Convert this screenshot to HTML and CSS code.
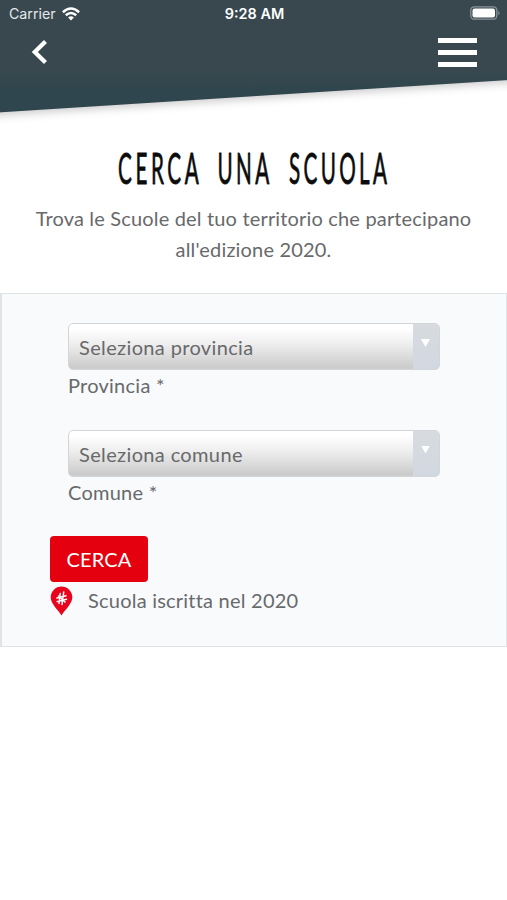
FILE: index.html
```html
<!DOCTYPE html>
<html lang="it">
<head>
<meta charset="utf-8">
<title>Cerca una scuola</title>
<link rel="stylesheet" href="styles.css">
</head>
<body>
<header class="header">
  <svg class="header-shape" width="507" height="125" viewBox="0 0 507 125" aria-hidden="true">
    <defs><linearGradient id="bar" x1="0" y1="0" x2="0" y2="1"><stop offset="0" stop-color="#39474f"/><stop offset=".65" stop-color="#39484f"/><stop offset=".8" stop-color="#30464e"/><stop offset="1" stop-color="#30464e"/></linearGradient></defs>
    <path class="slope" d="M-10-10H517V79.4L-10 112.9Z" fill="url(#bar)"/>
  </svg>
  <div class="status">
    <div class="carrier"><span>Carrier</span>
      <svg width="18" height="14" viewBox="0 0 18 14" fill="none" stroke="#fff" stroke-width="2.5"><path d="M.9 5.2Q9-2.1 17.1 5.2M3.8 8.3Q9 3.6 14.2 8.3"/><path d="M6.1 10.5Q9 8.2 11.9 10.5L9 13.5Z" fill="#fff" stroke="none"/></svg>
    </div>
    <time>9:28 AM</time>
    <svg class="battery" width="30" height="14" viewBox="0 0 30 14"><rect x=".8" y=".8" width="26" height="12.4" rx="3.5" fill="none" stroke="#89949a" stroke-width="1.3"/><rect x="2.5" y="2.4" width="22.5" height="9.2" rx="2" fill="#fff"/><path d="M28.3 4.7Q30.8 7 28.3 9.3Z" fill="#89949a"/></svg>
  </div>
  <nav class="nav">
    <svg width="20" height="26" viewBox="0 0 20 26"><path d="M15.5 2.5L4.8 13L15.5 23.5" fill="none" stroke="#fff" stroke-width="4.3"/></svg>
    <div class="menu"><i></i><i></i><i></i></div>
  </nav>
</header>
<main>
  <h1>
    <svg width="300" height="64" viewBox="-10 -10 300 64">
      <g class="title">
        <text transform="translate(4 37) scale(.48 1)" letter-spacing="7.5">CERCA</text>
        <text transform="translate(103.500 37) scale(.48 1)" letter-spacing="7">UNA</text>
        <text transform="translate(175 37) scale(.48 1)" letter-spacing="7">SCUOLA</text>
      </g>
    </svg>
  </h1>
  <p class="intro">Trova le Scuole del tuo territorio che partecipano<br>all'edizione 2020.</p>
  <form class="panel">
    <div class="field">
      <div class="select"><span>Seleziona provincia</span><b><i></i></b></div>
      <label>Provincia *</label>
    </div>
    <div class="field">
      <div class="select"><span>Seleziona comune</span><b><i></i></b></div>
      <label>Comune *</label>
    </div>
    <button class="submit" type="button">CERCA</button>
    <div class="legend">
      <svg width="24" height="30" viewBox="0 0 24 30"><path d="M11.500 29.500C8.500 24 .7 18 .7 11.200A10.8 10.6 0 0 1 22.3 11.200C22.3 18 14.500 24 11.500 29.500Z" fill="#e9041e"/><path d="M10.2 7.5L9 17.5M13.7 6L12 18.5M7 12L16 9.8M7.2 15.5L16.5 13.3M8.500 10L15 16" fill="none" stroke="#fff" stroke-width="1.5" stroke-linecap="round"/></svg>
      <span>Scuola iscritta nel 2020</span>
    </div>
  </form>
</main>
</body>
</html>
```

FILE: styles.css
```css
* { box-sizing: border-box; }
body { margin: 0; width: 507px; height: 900px; overflow: hidden; background: #fff; color: #68696b; font: 20px/30px Lato, sans-serif; letter-spacing: .17px; font-variant-ligatures: none; }
svg { display: block; }
.header { position: relative; height: 125px; color: #fff; }
.header-shape { position: absolute; left: 0; top: 0; }
.slope { filter: drop-shadow(0 3px 4px rgba(0, 0, 0, .2)); }
.status { position: relative; display: grid; grid-template-columns: 1fr auto 1fr; align-items: center; height: 27px; padding: 0 7px 0 9px; font: 15px/27px Inter, sans-serif; letter-spacing: 0; }
.carrier { display: flex; align-items: center; gap: 6px; color: #e4e9eb; font-size: 14.2px; }
.status time { font-weight: 600; font-size: 14.4px; }
.battery { justify-self: end; margin-top: -1px; }
.nav { position: relative; display: flex; justify-content: space-between; align-items: center; height: 50px; padding: 0 30px 0 30px; }
.menu { display: flex; flex-direction: column; gap: 7px; width: 39px; }
.menu i { height: 5px; background: #fff; }
h1 { display: flex; justify-content: center; margin: 12px 0 0; height: 66px; }
.title { font-family: Lato, sans-serif; font-size: 43px; font-weight: 400; fill: #0c0c0c; stroke: #0c0c0c; stroke-width: .8; stroke-linejoin: round; }
.intro { margin: 0; height: 90px; text-align: center; line-height: 30.5px; }
.panel { height: 354px; padding: 29px 0 0 48px; border: solid #e0e4e7; border-width: 1px 1px 1px 2px; background: #f8fafc; }
.field { width: 372px; height: 106.500px; margin-left: 18px; }
.select { display: flex; justify-content: space-between; height: 47px; border: 1px solid #d3d6d9; border-radius: 5px; overflow: hidden; background: linear-gradient(#fff 10%, #eee 45%, #ccc 95%); line-height: 46px; padding-left: 10px; letter-spacing: .36px; }
.select b { width: 26px; background: linear-gradient(#d7dbdf, #d2d8e1); }
.select i { display: block; margin: 15px 0 0 8px; width: 9px; height: 8px; background: #fff; clip-path: polygon(0 0, 100% 0, 50% 100%); }
label { display: inline-block; line-height: 30px; letter-spacing: .25px; }
.submit { display: block; width: 98px; height: 46px; padding: 0; border: 0; border-radius: 4px; background: #e4000f; color: #fff; font: 20px/45px Lato, sans-serif; letter-spacing: .2px; }
.legend { display: flex; align-items: center; height: 38px; gap: 14px; letter-spacing: .22px; }
.legend span { margin-top: -2px; }
```
